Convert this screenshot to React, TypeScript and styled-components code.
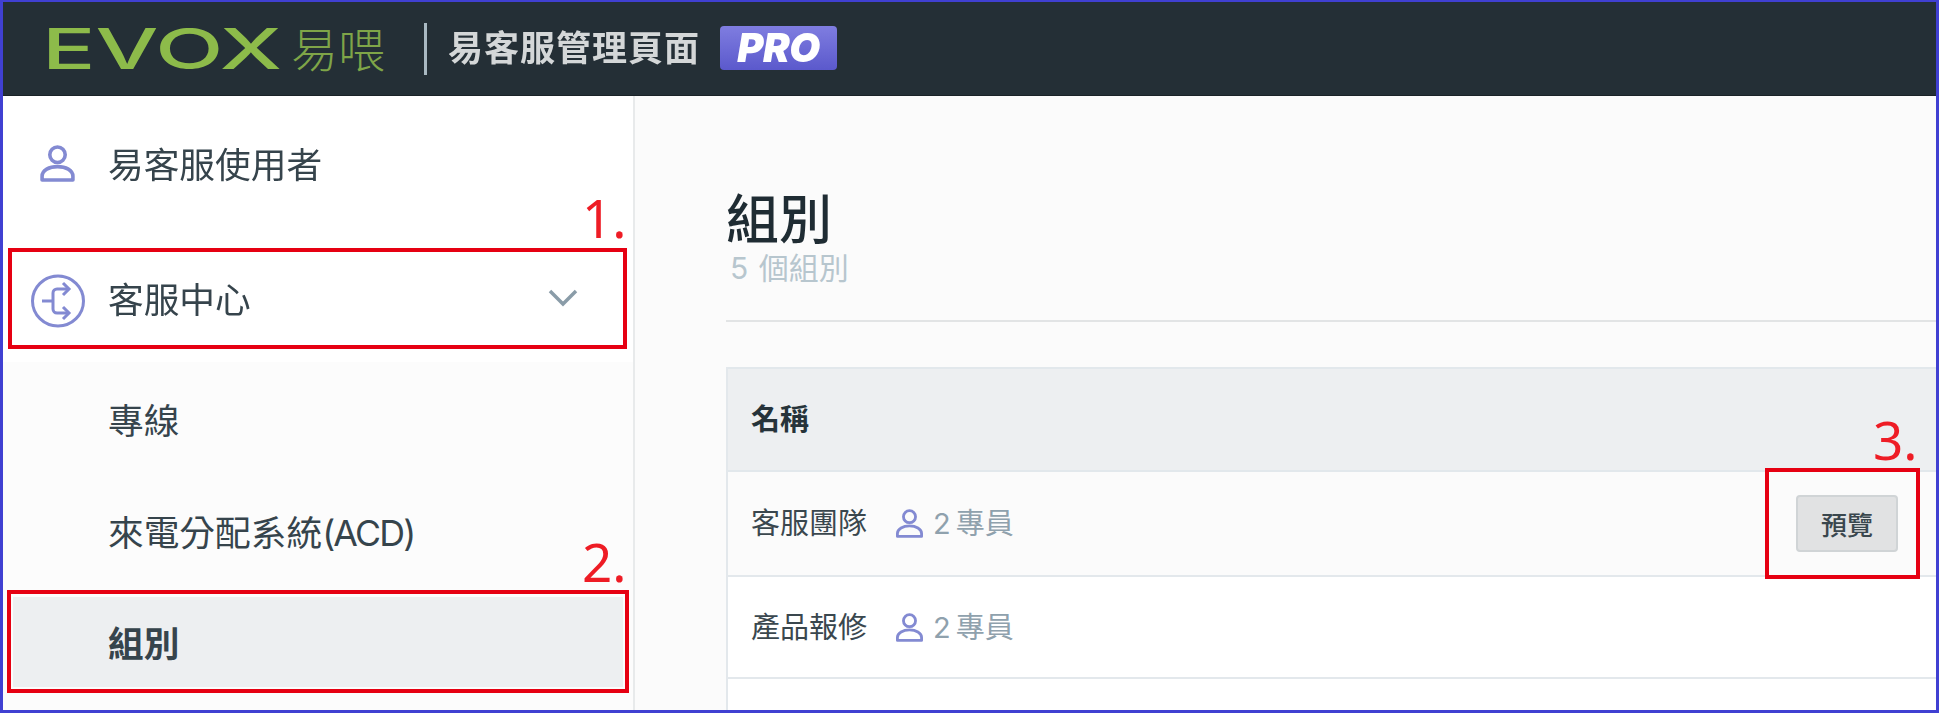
import styled, { createGlobalStyle } from "styled-components";

const GlobalStyle = createGlobalStyle`
  html, body {
    margin: 0;
    padding: 0;
    background: #ffffff;
  }
`;

const Frame = styled.div`
  position: relative;
  box-sizing: border-box;
  height: 100vh;
  display: flex;
  flex-direction: column;
  overflow: hidden;
  border: 3px solid #4040d2;
  border-top-width: 2px;
  font-family: "Inter", "Noto Sans CJK TC", "Noto Sans", sans-serif;
  filter: blur(0.7px);
`;

const TopBar = styled.header`
  box-sizing: border-box;
  flex: 0 0 94px;
  display: flex;
  align-items: center;
  background: #242f36;
  border-bottom: 1px solid #1a2227;
`;

const Logo = styled.svg`
  display: block;
  margin-left: 44px;
  width: 340px;
  height: 54px;
  overflow: visible;
`;

const BarDivider = styled.div`
  width: 3px;
  height: 52px;
  margin-left: 37px;
  background: #a9b9c2;
`;

const ProductName = styled.div`
  margin-left: 21px;
  font-size: 35px;
  font-weight: 700;
  line-height: 1;
  letter-spacing: 1px;
  color: #d4d7d8;
`;

const ProBadge = styled.div`
  box-sizing: border-box;
  width: 117px;
  height: 44px;
  margin: -2px 0 0 20px;
  display: flex;
  align-items: center;
  justify-content: center;
  border-radius: 4px;
  background: linear-gradient(180deg, #7f7de0 0%, #5b59cc 100%);
  font-family: "Inter", sans-serif;
  font-size: 40px;
  font-weight: 900;
  font-style: italic;
  letter-spacing: -0.5px;
  color: #ffffff;
`;

const Body = styled.div`
  flex: 1;
  display: flex;
  min-height: 0;
`;

const Sidebar = styled.nav`
  box-sizing: border-box;
  flex: 0 0 632px;
  display: flex;
  flex-direction: column;
  padding-top: 17px;
  background: #ffffff;
  border-right: 2px solid #e8eaeb;
`;

const NavItem = styled.div<{ $height: number; $top?: number; $bottom?: number }>`
  box-sizing: border-box;
  height: ${(p) => p.$height}px;
  margin-top: ${(p) => p.$top ?? 0}px;
  padding-bottom: ${(p) => p.$bottom ?? 0}px;
  display: flex;
  align-items: center;
  font-size: 35.700px;
  color: #36444c;
`;

const NavIcon = styled.span<{ $drop?: number }>`
  flex: 0 0 105px;
  box-sizing: border-box;
  display: flex;
  justify-content: center;
  padding-left: 4px;
  margin-top: ${(p) => p.$drop ?? 0}px;
`;

const NavLabel = styled.span`
  flex: 1;
  padding-top: 6px;
  line-height: 1;
`;

const Chevron = styled.svg`
  display: block;
  width: 30px;
  height: 18px;
  margin-right: 55px;
`;

const SubMenu = styled.div`
  flex: 1;
  display: flex;
  flex-direction: column;
  padding: 7px 10px 0;
  background: #fcfcfc;
`;

const SubItem = styled.div<{ $active?: boolean }>`
  box-sizing: border-box;
  height: ${(p) => (p.$active ? 90 : 100)}px;
  margin-bottom: ${(p) => (p.$active ? 0 : 12)}px;
  padding: 5px 0 0 95px;
  display: flex;
  align-items: center;
  font-size: 35.700px;
  line-height: 1;
  font-weight: ${(p) => (p.$active ? 700 : 400)};
  color: #36444c;
  background: ${(p) => (p.$active ? "#edeff1" : "transparent")};
  ${(p) => (p.$active ? "margin-top: 4px;" : "")}
`;

const Latin = styled.span`
  letter-spacing: -1.800px;
`;

const Content = styled.main`
  flex: 1;
  min-width: 0;
  padding: 94px 0 0 91px;
  background: #fbfbfb;
`;

const PageTitle = styled.h1`
  margin: 0;
  font-size: 53px;
  line-height: 60px;
  font-weight: 500;
  color: #1f2c33;
`;

const PageCount = styled.div`
  margin: 0 0 0 4px;
  font-size: 30px;
  line-height: 36px;
  word-spacing: 2px;
  color: #b7c6ce;
`;

const Rule = styled.div`
  height: 2px;
  margin-top: 34px;
  background: #e2e4e5;
`;

const Table = styled.div`
  margin-top: 45px;
  border-left: 2px solid #e3e8ec;
`;

const HeaderRow = styled.div`
  box-sizing: border-box;
  height: 105px;
  display: flex;
  align-items: center;
  padding: 0 0 6px 23px;
  background: #edeff1;
  border-top: 2px solid #e2e8ec;
  border-bottom: 2px solid #e2e8ec;
  font-size: 29px;
  font-weight: 700;
  color: #26333a;
`;

const Row = styled.div<{ $tint?: boolean; $height: number }>`
  box-sizing: border-box;
  height: ${(p) => p.$height}px;
  display: flex;
  align-items: center;
  padding: 0 38px 0 23px;
  background: ${(p) => (p.$tint ? "#fbfbfb" : "#ffffff")};
  border-bottom: 2px solid #e3e8ec;
`;

const GroupName = styled.span`
  font-size: 29px;
  line-height: 1;
  color: #3a474e;
`;

const Members = styled.span`
  display: flex;
  align-items: center;
  margin-left: 28px;
  font-size: 29px;
  line-height: 1;
  word-spacing: -3px;
  color: #8fa1ad;
  gap: 9px;
`;

const PreviewButton = styled.button`
  box-sizing: border-box;
  width: 102px;
  height: 57px;
  margin-left: auto;
  padding: 0;
  background: #e1e2e3;
  border: 2px solid #d0d4d6;
  border-radius: 4px;
  font-family: inherit;
  font-size: 26px;
  font-weight: 500;
  color: #3a474e;
`;

const RedBox = styled.div<{ $x: number; $y: number; $w: number; $h: number }>`
  position: absolute;
  box-sizing: border-box;
  left: ${(p) => p.$x}px;
  top: ${(p) => p.$y}px;
  width: ${(p) => p.$w}px;
  height: ${(p) => p.$h}px;
  border: 4px solid #e60012;
`;

const Step = styled.span<{ $x: number; $y: number }>`
  position: absolute;
  left: ${(p) => p.$x}px;
  top: ${(p) => p.$y}px;
  font-family: "Noto Sans", sans-serif;
  font-size: 53px;
  line-height: 60px;
  color: #ee1c25;
`;

const PersonIcon = ({ size }: { size: number }) => (
  <svg width={size} height={size} viewBox="0 0 36 36" fill="none" stroke="#838ad2" strokeWidth="3.500">
    <circle cx="18" cy="9.500" r="7.500" />
    <path d="M3 34 v-3.500 c0-6 7-9.500 15-9.500 s15 3.500 15 9.500 V34 Z" strokeLinejoin="round" />
  </svg>
);

const RouteIcon = () => (
  <svg width="56" height="54" viewBox="0 0 56 54" fill="none" stroke="#838ad2" strokeWidth="3">
    <ellipse cx="28" cy="27" rx="25.500" ry="25" />
    <path d="M12 27 H23" />
    <path d="M39 15 H27 a4 4 0 0 0 -4 4 V35 a4 4 0 0 0 4 4 H39" />
    <path d="M33 9 L39 15 L33 21" />
    <path d="M33 33 L39 39 L33 45" />
  </svg>
);

const members = (n: number) => (
  <Members>
    <PersonIcon size={29} />
    <span>{n} 專員</span>
  </Members>
);

export default function App() {
  return (
    <>
      <GlobalStyle />
      <Frame>
        <TopBar>
          <Logo viewBox="0 0 340 54">
            <text
              x="-5"
              y="47"
              textLength="240"
              lengthAdjust="spacingAndGlyphs"
              fill="#8dbb4a"
              fontFamily="Inter, sans-serif"
              fontSize="56"
              fontWeight="500"
            >
              EVOX
            </text>
            <text x="244" y="45" fill="#7fa548" fontFamily="'Noto Sans CJK TC', sans-serif" fontSize="47" fontWeight="300">
              易喂
            </text>
          </Logo>
          <BarDivider />
          <ProductName>易客服管理頁面</ProductName>
          <ProBadge>PRO</ProBadge>
        </TopBar>
        <Body>
          <Sidebar>
            <NavItem $height={100}>
              <NavIcon>
                <PersonIcon size={37} />
              </NavIcon>
              <NavLabel>易客服使用者</NavLabel>
            </NavItem>
            <NavItem $height={116} $top={33} $bottom={12}>
              <NavIcon $drop={6}>
                <RouteIcon />
              </NavIcon>
              <NavLabel>客服中心</NavLabel>
              <Chevron viewBox="0 0 30 18" fill="none" stroke="#8a9ca8" strokeWidth="3.500">
                <path d="M2 2 L15 15 L28 2" />
              </Chevron>
            </NavItem>
            <SubMenu>
              <SubItem>專線</SubItem>
              <SubItem>
                <span>
                  來電分配系統<Latin>(ACD)</Latin>
                </span>
              </SubItem>
              <SubItem $active>組別</SubItem>
            </SubMenu>
          </Sidebar>
          <Content>
            <PageTitle>組別</PageTitle>
            <PageCount>5 個組別</PageCount>
            <Rule />
            <Table>
              <HeaderRow>名稱</HeaderRow>
              <Row $tint $height={105}>
                <GroupName>客服團隊</GroupName>
                {members(2)}
                <PreviewButton>預覽</PreviewButton>
              </Row>
              <Row $height={102}>
                <GroupName>產品報修</GroupName>
                {members(2)}
              </Row>
              <Row $height={60} />
            </Table>
          </Content>
        </Body>
        <RedBox $x={5} $y={246} $w={619} $h={101} />
        <RedBox $x={4} $y={588} $w={622} $h={103} />
        <RedBox $x={1762} $y={466} $w={155} $h={111} />
        <Step $x={579} $y={186}>1.</Step>
        <Step $x={579} $y={530}>2.</Step>
        <Step $x={1870} $y={408}>3.</Step>
      </Frame>
    </>
  );
}
